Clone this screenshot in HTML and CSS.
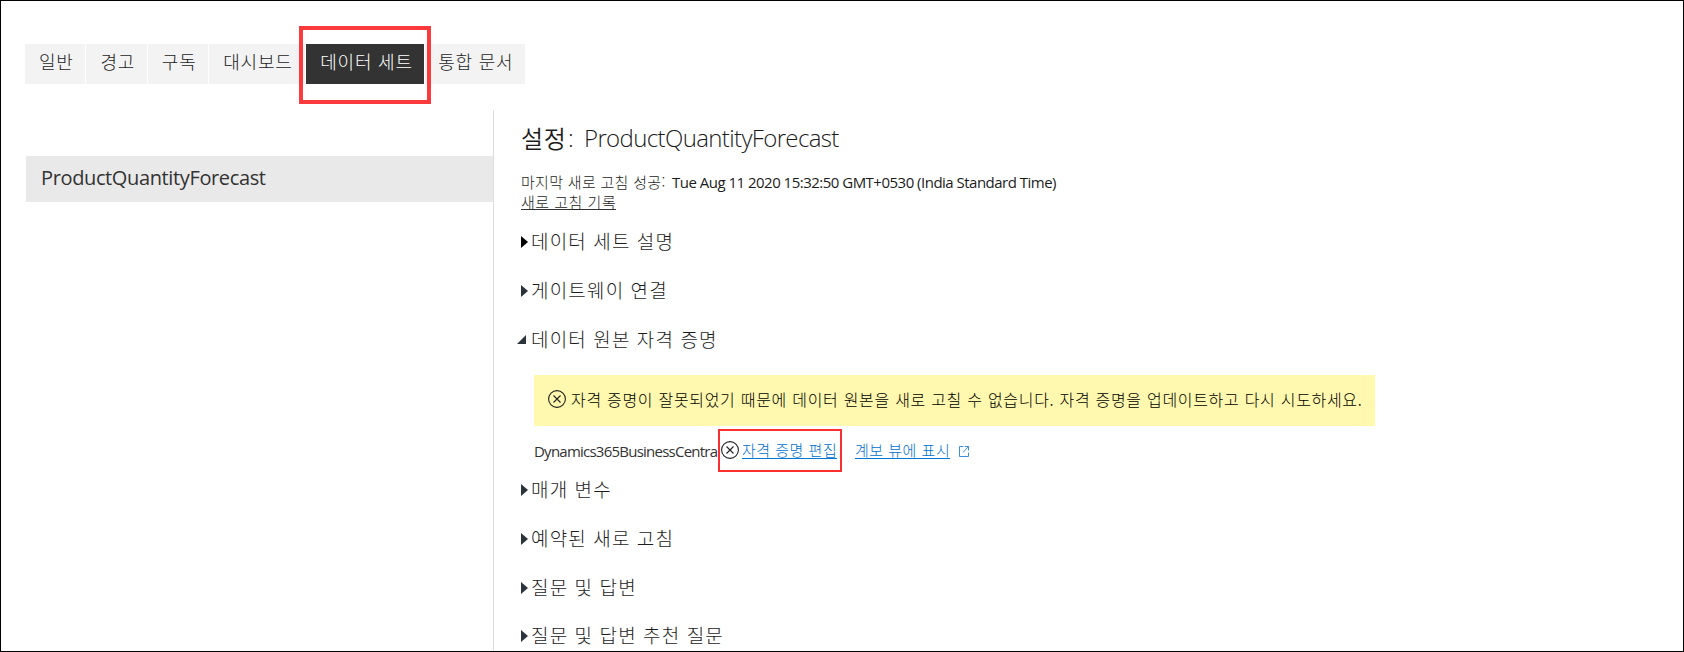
FILE: index.html
```html
<!DOCTYPE html>
<html lang="ko">
<head>
<meta charset="utf-8">
<title>설정</title>
<link rel="stylesheet" href="styles.css">
</head>
<body>
<div class="page">
  <nav class="tabs">
    <a class="tab">일반</a>
    <a class="tab">경고</a>
    <a class="tab">구독</a>
    <a class="tab tab-wide">대시보드</a>
    <a class="tab active">데이터 세트<span class="mark mark-tab"></span></a>
    <a class="tab tab-last">통합 문서</a>
  </nav>
  <div class="body">
    <aside class="side"><div class="side-item"><span>ProductQuantityForecast</span></div></aside>
    <main class="main">
      <h1 class="title"><span class="title-ko">설정</span><span class="title-colon">:</span><span class="title-name">ProductQuantityForecast</span></h1>
      <div class="refresh"><span class="ko">마지막 새로 고침 성공:</span><span class="stamp">Tue Aug 11 2020 15:32:50 GMT+0530 (India Standard Time)</span></div>
      <div class="history"><a class="ko">새로 고침 기록</a></div>
      <div class="row first"><svg class="arrow" viewBox="0 0 7 12"><path d="M0 0L7 6L0 12Z"/></svg><span>데이터 세트 설명</span></div>
      <div class="row"><svg class="arrow" viewBox="0 0 7 12"><path d="M0 0L7 6L0 12Z"/></svg><span>게이트웨이 연결</span></div>
      <div class="row open"><svg class="arrow-open" viewBox="0 0 9 9"><path d="M9 0V9H0Z"/></svg><span>데이터 원본 자격 증명</span></div>
      <div class="alert">
        <svg class="cross" viewBox="0 0 18 18"><circle cx="9" cy="9" r="8.4"/><path d="M5.5 5.5L12.5 12.5M12.5 5.5L5.5 12.5"/></svg>
        <span class="alert-text">자격 증명이 잘못되었기 때문에 데이터 원본을 새로 고칠 수 없습니다. 자격 증명을 업데이트하고 다시 시도하세요.</span>
      </div>
      <div class="cred">
        <span class="source">Dynamics365BusinessCentra</span>
        <span class="edit"><svg class="cross" viewBox="0 0 18 18"><circle cx="9" cy="9" r="8.4"/><path d="M5.5 5.5L12.5 12.5M12.5 5.5L5.5 12.5"/></svg><a class="link ko">자격 증명 편집</a><span class="mark mark-edit"></span></span>
        <a class="link ko lineage">계보 뷰에 표시</a>
        <svg class="ext" viewBox="0 0 11 11"><path d="M4.500.5H.5V10.500H9.500V6.500M6 .5H9.500V4.500M9.500.5L4 6.500"/></svg>
      </div>
      <div class="row"><svg class="arrow" viewBox="0 0 7 12"><path d="M0 0L7 6L0 12Z"/></svg><span>매개 변수</span></div>
      <div class="row"><svg class="arrow" viewBox="0 0 7 12"><path d="M0 0L7 6L0 12Z"/></svg><span>예약된 새로 고침</span></div>
      <div class="row"><svg class="arrow" viewBox="0 0 7 12"><path d="M0 0L7 6L0 12Z"/></svg><span>질문 및 답변</span></div>
      <div class="row"><svg class="arrow" viewBox="0 0 7 12"><path d="M0 0L7 6L0 12Z"/></svg><span>질문 및 답변 추천 질문</span></div>
    </main>
  </div>
</div>
</body>
</html>
```
FILE: styles.css
```css
* { box-sizing: border-box; }
body { margin: 0; background: #fff; color: #1c1c1c; font-family: "Noto Sans CJK KR", sans-serif; font-weight: 300; }
.page { width: 1684px; height: 652px; border: 1px solid #000; overflow: hidden; padding-top: 43px; }
.tabs { display: flex; gap: 1px; padding-left: 24px; height: 66px; align-items: flex-start; white-space: nowrap; }
.tab { position: relative; width: 60.400px; height: 40px; padding-left: 14px; background: #f3f3f3; font-size: 18px; line-height: 35px; letter-spacing: .8px; }
.tab-wide { width: 96px; }
.active { background: #333; color: #fff; width: 118px; z-index: 1; }
.tab-last { width: 100px; padding-left: 13px; }
.mark { position: absolute; pointer-events: none; }
.mark-tab { left: -7px; top: -18px; width: 132px; height: 78px; border: 4px solid #fb3a3d; }
.body { display: flex; height: 542px; }
.side { width: 493px; padding: 46px 0 0 25px; border-right: 1px solid #ddd; }
.side-item { height: 46px; padding-left: 15px; background: #e9e9e9; color: #333; font: 400 20px/43px "Open Sans", sans-serif; letter-spacing: -.37px; }
.main { padding: 11px 0 0 27px; white-space: nowrap; }
.title { display: flex; margin: 0; height: 34px; line-height: 34px; font-size: 24px; font-weight: 400; font-family: "Open Sans", sans-serif; }
.title-ko { font-family: "Noto Sans CJK KR", sans-serif; font-weight: 350; width: 47px; letter-spacing: .6px; }
.title-colon { width: 16px; font-weight: 300; }
.title-name { font-weight: 300; letter-spacing: -.63px; }
.refresh { display: flex; margin-top: 17px; height: 20px; line-height: 20px; }
.ko { font-size: 15px; letter-spacing: .5px; }
.refresh .ko { width: 151px; letter-spacing: .3px; }
.stamp { font-family: "Open Sans", sans-serif; font-weight: 400; font-size: 15px; letter-spacing: -.51px; }
.history { height: 20px; line-height: 19px; }
.history a { border-bottom: 1px solid #333; display: inline-block; height: 18px; }
.row { display: flex; align-items: center; height: 48.700px; font-size: 19px; letter-spacing: 1.2px; word-spacing: -.3px; line-height: 28px; }
.first { margin-top: 6px; }
.row span { position: relative; top: -1px; }
.arrow { width: 7px; height: 12px; margin-right: 3px; }
.arrow, .arrow-open { fill: #2b333b; flex: none; }
.first .arrow { fill: #000; }
.arrow-open { width: 9px; height: 9px; margin: 0 5px 0 -4px; }
.alert { display: flex; align-items: center; width: 841px; height: 51px; margin: 11px 0 0 13px; padding: 0 0 3px 14px; background: #fff8ae; color: #000; }
.cross { width: 18px; height: 18px; flex: none; fill: none; stroke: #222; stroke-width: 1.1; }
.alert-text { margin-left: 5px; font-size: 16px; letter-spacing: .68px; word-spacing: .1px; line-height: 22px; }
.cred { display: flex; align-items: center; height: 40px; margin: 0 0 0 13px; padding-top: 7px; }
.source { width: 185px; margin-right: 2px; padding-top: 2px; color: #333; font: 400 15px/22px "Open Sans", sans-serif; letter-spacing: -.76px; }
.edit { position: relative; display: flex; align-items: center; width: 124px; }
.link { color: #0070d0; border-bottom: 1px solid #0078d4; line-height: 17px; height: 18px; }
.edit .link { margin-left: 3px; }
.lineage { margin-left: 10px; }
.mark-edit { left: -3px; top: -12px; width: 124px; height: 43px; border: 2px solid #fa2f2f; }
.ext { width: 11px; height: 11px; margin: 3px 0 0 9px; fill: none; stroke: #3a8fdc; stroke-width: 1; }
```
